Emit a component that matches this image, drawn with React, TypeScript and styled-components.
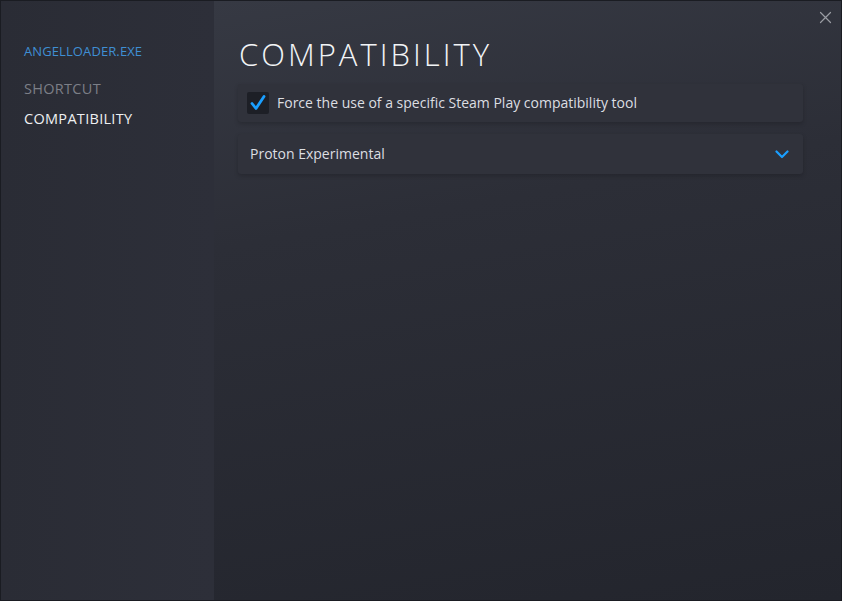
import React from 'react';
import styled, { createGlobalStyle } from 'styled-components';

const GlobalStyle = createGlobalStyle`
  html, body {
    margin: 0;
    padding: 0;
    background: #1b1d24;
  }
  body {
    font-family: 'Open Sans', 'Noto Sans', Arial, sans-serif;
  }
`;

const Window = styled.div`
  width: 842px;
  height: 601px;
  box-sizing: border-box;
  border: 1px solid #1a1c22;
  display: flex;
  position: relative;
  overflow: hidden;
`;

const Sidebar = styled.nav`
  width: 213px;
  flex-shrink: 0;
  background: linear-gradient(to right, #2a2c35 0%, #2d2f39 100%);
  padding: 40px 0 0 23px;
  box-sizing: border-box;
  display: flex;
  flex-direction: column;
`;

const NavItem = styled.div<{ $tone: 'title' | 'muted' | 'active' }>`
  font-size: ${(p) => (p.$tone === 'title' ? '13px' : '14.5px')};
  letter-spacing: ${(p) => (p.$tone === 'title' ? '0.1px' : '0.3px')};
  text-transform: uppercase;
  line-height: 20px;
  color: ${(p) => (p.$tone === 'title' ? '#3f8fd4' : p.$tone === 'muted' ? '#7c7f87' : '#eef0f2')};
  margin-bottom: ${(p) => (p.$tone === 'title' ? '18px' : '10px')};
`;

const Main = styled.main`
  flex: 1;
  background: linear-gradient(170deg, #363943 0%, #2c2e37 35%, #23252d 100%);
  padding: 33px 38px 0 24px;
  box-sizing: border-box;
`;

const Title = styled.h1`
  margin: 0 0 10px 1px;
  font-weight: 300;
  font-size: 31px;
  line-height: 40px;
  letter-spacing: 3px;
  color: #f2f4f6;
`;

const Row = styled.div<{ $select?: boolean }>`
  height: ${(p) => (p.$select ? '40px' : '38px')};
  display: flex;
  align-items: center;
  padding: 0 ${(p) => (p.$select ? '14px 0 12px' : '9px')};
  background: #30323b;
  border-radius: 3px;
  margin-bottom: 12px;
  box-shadow: 0 2px 4px rgba(0, 0, 0, 0.18);
  color: #dcdee2;
  font-size: 14px;
  gap: 8px;
`;

const Check = styled.div`
  width: 22px;
  height: 22px;
  border-radius: 2px;
  background: #1d1f26;
  display: flex;
  align-items: center;
  justify-content: center;
  flex-shrink: 0;
`;

const Label = styled.span`
  flex: 1;
  margin-top: -2px;
`;

const Close = styled.div`
  position: absolute;
  right: 9px;
  top: 6px;
  width: 13px;
  height: 13px;
`;

export default function App() {
  return (
    <>
      <GlobalStyle />
      <Window>
        <Sidebar>
          <NavItem $tone="title">AngelLoader.exe</NavItem>
          <NavItem $tone="muted">Shortcut</NavItem>
          <NavItem $tone="active">Compatibility</NavItem>
        </Sidebar>
        <Main>
          <Title>COMPATIBILITY</Title>
          <Row>
            <Check>
              <svg width="18" height="18" viewBox="0 0 18 18">
                <path d="M3 9.5 L7 14.5 L15 2.5" fill="none" stroke="#1a9fff" strokeWidth="2.8" strokeLinecap="round" strokeLinejoin="round" />
              </svg>
            </Check>
            <Label>Force the use of a specific Steam Play compatibility tool</Label>
          </Row>
          <Row $select>
            <Label>Proton Experimental</Label>
            <svg width="14" height="9" viewBox="0 0 14 9">
              <path d="M1.5 1.5 L7 7 L12.5 1.5" fill="none" stroke="#1a9fff" strokeWidth="2.2" strokeLinecap="round" strokeLinejoin="round" />
            </svg>
          </Row>
        </Main>
        <Close>
          <svg width="13" height="13" viewBox="0 0 13 13">
            <path d="M1.5 1.5 L11.5 11.5 M11.5 1.5 L1.5 11.5" stroke="#9a9ca3" strokeWidth="1.2" strokeLinecap="round" />
          </svg>
        </Close>
      </Window>
    </>
  );
}
